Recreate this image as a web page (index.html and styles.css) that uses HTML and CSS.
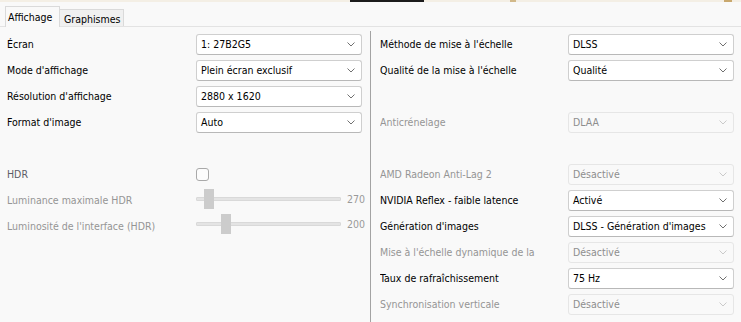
FILE: index.html
```html
<!DOCTYPE html>
<html lang="fr">
<head>
<meta charset="utf-8">
<title>Affichage</title>
<link rel="stylesheet" href="styles.css">
</head>
<body>
<div class="strip"></div>
<div class="tabbar">
  <div class="tab tab-active">Affichage</div>
  <div class="tab tab-inactive">Graphismes</div>
</div>
<div class="content">
  <div class="col col-left">
    <div class="label">Écran</div>
    <div class="combo"><span>1: 27B2G5</span><svg class="chev" viewBox="0 0 8 5"><path d="M0.5 0.5 L4 4 L7.5 0.5"/></svg></div>
    <div class="label">Mode d'affichage</div>
    <div class="combo"><span>Plein écran exclusif</span><svg class="chev" viewBox="0 0 8 5"><path d="M0.5 0.5 L4 4 L7.5 0.5"/></svg></div>
    <div class="label">Résolution d'affichage</div>
    <div class="combo"><span>2880 x 1620</span><svg class="chev" viewBox="0 0 8 5"><path d="M0.5 0.5 L4 4 L7.5 0.5"/></svg></div>
    <div class="label">Format d'image</div>
    <div class="combo"><span>Auto</span><svg class="chev" viewBox="0 0 8 5"><path d="M0.5 0.5 L4 4 L7.5 0.5"/></svg></div>
    <div class="spacer"></div>
    <div class="label label-hdr">HDR</div>
    <div class="checkbox"></div>
    <div class="label label-off">Luminance maximale HDR</div>
    <div class="slider"><div class="track"><div class="thumb" style="left:7px"></div></div><span class="value">270</span></div>
    <div class="label label-off">Luminosité de l'interface (HDR)</div>
    <div class="slider slider-2"><div class="track"><div class="thumb" style="left:24px"></div></div><span class="value">200</span></div>
  </div>
  <div class="col col-right">
    <div class="label">Méthode de mise à l'échelle</div>
    <div class="combo"><span>DLSS</span><svg class="chev" viewBox="0 0 8 5"><path d="M0.5 0.5 L4 4 L7.5 0.5"/></svg></div>
    <div class="label">Qualité de la mise à l'échelle</div>
    <div class="combo"><span>Qualité</span><svg class="chev" viewBox="0 0 8 5"><path d="M0.5 0.5 L4 4 L7.5 0.5"/></svg></div>
    <div class="spacer"></div>
    <div class="label label-off">Anticrénelage</div>
    <div class="combo combo-off"><span>DLAA</span><svg class="chev" viewBox="0 0 8 5"><path d="M0.5 0.5 L4 4 L7.5 0.5"/></svg></div>
    <div class="spacer"></div>
    <div class="label label-off">AMD Radeon Anti-Lag 2</div>
    <div class="combo combo-off"><span>Désactivé</span><svg class="chev" viewBox="0 0 8 5"><path d="M0.5 0.5 L4 4 L7.5 0.5"/></svg></div>
    <div class="label">NVIDIA Reflex - faible latence</div>
    <div class="combo"><span>Activé</span><svg class="chev" viewBox="0 0 8 5"><path d="M0.5 0.5 L4 4 L7.5 0.5"/></svg></div>
    <div class="label">Génération d'images</div>
    <div class="combo"><span>DLSS - Génération d'images</span><svg class="chev" viewBox="0 0 8 5"><path d="M0.5 0.5 L4 4 L7.5 0.5"/></svg></div>
    <div class="label label-off label-cut">Mise à l'échelle dynamique de la</div>
    <div class="combo combo-off"><span>Désactivé</span><svg class="chev" viewBox="0 0 8 5"><path d="M0.5 0.5 L4 4 L7.5 0.5"/></svg></div>
    <div class="label">Taux de rafraîchissement</div>
    <div class="combo"><span>75 Hz</span><svg class="chev" viewBox="0 0 8 5"><path d="M0.5 0.5 L4 4 L7.5 0.5"/></svg></div>
    <div class="label label-off">Synchronisation verticale</div>
    <div class="combo combo-off"><span>Désactivé</span><svg class="chev" viewBox="0 0 8 5"><path d="M0.5 0.5 L4 4 L7.5 0.5"/></svg></div>
  </div>
</div>
</body>
</html>
```
FILE: styles.css
```css
html, body {
  margin: 0;
  padding: 0;
}
body {
  width: 741px;
  height: 322px;
  overflow: hidden;
  background: #f9f9f9;
  font-family: "DejaVu Sans", "Liberation Sans", sans-serif;
  font-stretch: condensed;
  font-size: 10.5px;
  color: #000;
}
.strip {
  height: 2px;
  background: linear-gradient(to right,
    #f4efe5 0, #f4efe5 350px,
    #1c1c1c 350px, #1c1c1c 424px,
    #f4efe5 424px, #f4efe5 510px,
    #d2b98a 510px, #d2b98a 516px,
    #f4efe5 516px, #f4efe5 724px,
    #c9a86e 724px, #c9a86e 732px,
    #f4efe5 732px);
}
.tabbar {
  height: 24px;
  border-bottom: 1px solid #e3e3e3;
  display: flex;
  align-items: flex-end;
  padding-left: 5px;
}
.tab {
  box-sizing: border-box;
  display: flex;
  align-items: center;
  white-space: nowrap;
}
.tab-active {
  width: 55px;
  height: 21px;
  margin-bottom: -1px;
  padding-left: 2px;
  padding-bottom: 1px;
  background: #f9f9f9;
  border: 1px solid #dadada;
  border-bottom: none;
}
.tab-inactive {
  width: 64px;
  height: 17px;
  padding-left: 4px;
  padding-top: 1px;
  background: #f0f0f0;
  border-top: 1px solid #dadada;
  border-right: 1px solid #dadada;
}
.content {
  display: flex;
  padding-top: 4px;
}
.col {
  display: grid;
  grid-auto-rows: 26px;
  align-items: center;
  align-content: start;
}
.col-left {
  width: 363px;
  padding-left: 7px;
  grid-template-columns: 189px 174px;
}
.col-right {
  width: 361px;
  height: 291px;
  padding-left: 9px;
  border-left: 1px solid #a3a3a3;
  grid-template-columns: 188px 166px;
}
.spacer {
  grid-column: 1 / -1;
}
.label {
  white-space: nowrap;
  overflow: hidden;
}
.label-cut {
  width: 182px;
}
.label-off {
  color: #959595;
}
.label-hdr {
  color: #5c5c66;
}
.combo {
  box-sizing: border-box;
  width: 166px;
  height: 21px;
  background: #ffffff;
  border: 1px solid #cfcfcf;
  border-bottom-color: #b8b8b8;
  border-radius: 3px;
  display: flex;
  align-items: center;
  justify-content: space-between;
  padding: 0 6px 0 4px;
  white-space: nowrap;
}
.combo-off {
  background: #f9f9f9;
  border-color: #e6e6e6;
  color: #8e8e8e;
}
.chev {
  width: 8px;
  height: 5px;
  fill: none;
  stroke: #606060;
  stroke-width: 0.9;
}
.combo-off .chev {
  stroke: #c4c4c4;
}
.checkbox {
  box-sizing: border-box;
  width: 13px;
  height: 13px;
  border: 1px solid #a9a9a9;
  border-radius: 3px;
  background: #fcfcfc;
}
.slider {
  display: flex;
  align-items: center;
  gap: 6px;
  margin-top: -3px;
}
.slider-2 {
  margin-top: -5px;
}
.track {
  position: relative;
  box-sizing: border-box;
  width: 145px;
  height: 4px;
  background: #e4e4e4;
  border: 1px solid #d9d9d9;
  border-radius: 1px;
}
.thumb {
  position: absolute;
  top: -9px;
  width: 10px;
  height: 20px;
  background: #cccccc;
}
.value {
  color: #9a9a9a;
}
```
